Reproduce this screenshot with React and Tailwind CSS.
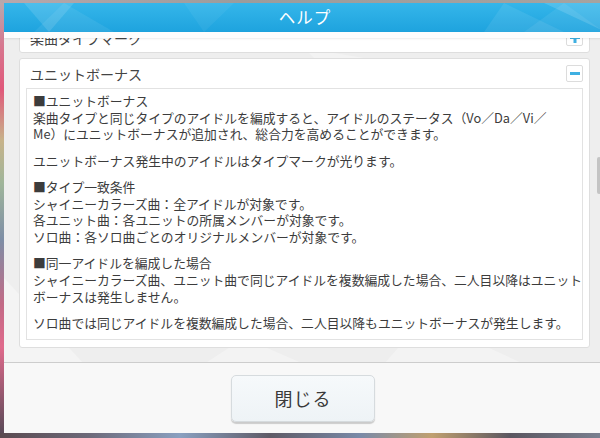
import { useState } from "react"

const bodyLines = [
  ["■ユニットボーナス", "楽曲タイプと同じタイプのアイドルを編成すると、アイドルのステータス（Vo／Da／Vi／", "Me）にユニットボーナスが追加され、総合力を高めることができます。"],
  ["ユニットボーナス発生中のアイドルはタイプマークが光ります。"],
  ["■タイプ一致条件", "シャイニーカラーズ曲：全アイドルが対象です。", "各ユニット曲：各ユニットの所属メンバーが対象です。", "ソロ曲：各ソロ曲ごとのオリジナルメンバーが対象です。"],
  ["■同一アイドルを編成した場合", "シャイニーカラーズ曲、ユニット曲で同じアイドルを複数編成した場合、二人目以降はユニット", "ボーナスは発生しません。"],
  ["ソロ曲では同じアイドルを複数編成した場合、二人目以降もユニットボーナスが発生します。"],
]

function ToggleButton({ open }) {
  return (
    <div className="relative w-[17px] h-[17px] shrink-0 rounded-[2px] border border-[#dcdcdc] bg-white flex items-center justify-center">
      <span className="block w-[10px] h-[3px] bg-[#3fb0e2]" />
      {!open && <span className="absolute left-1/2 top-1/2 -translate-x-1/2 -translate-y-1/2 block w-[3px] h-[10px] bg-[#3fb0e2]" />}
    </div>
  )
}

function HelpCard({ title, open, children }) {
  return (
    <div className="bg-white border border-[#dedede] rounded-[3px]">
      <div className="h-[29px] flex items-center justify-between pl-[10px] pr-[6px]">
        <span className="text-[14px] leading-none text-[#444]">{title}</span>
        <ToggleButton open={open} />
      </div>
      {open && <div className="px-[6px] pb-[7px]">{children}</div>}
    </div>
  )
}

export default function App() {
  const [openId] = useState("unit")

  return (
    <div className="w-[600px] h-[438px] overflow-hidden flex flex-col bg-[#8f8a8c] font-['Noto_Sans_CJK_JP','Noto_Sans',sans-serif]">
      <div className="h-[3px] shrink-0 bg-[linear-gradient(90deg,#b8a8ac,#9c9c9c_40%,#a6a3a0)]" />
      <div className="flex flex-1 min-h-0">
        {/* 左端の背景 */}
        <div className="w-[4px] shrink-0 bg-[linear-gradient(180deg,#b9a9ad_0%,#d7778f_10%,#e0587a_20%,#c7b38a_32%,#9fb59a_42%,#7e8ea6_55%,#c26a86_70%,#e06a8c_80%,#5a4a58_100%)]" />

        {/* ダイアログ本体 */}
        <div className="w-[602px] shrink-0 flex flex-col bg-[#eeeeee]">
          <div className="relative h-[29px] shrink-0 overflow-hidden bg-[linear-gradient(180deg,#35b6ea_0%,#1ea3de_100%)] flex items-center justify-center">
            <svg className="absolute inset-0" width="602" height="29" viewBox="0 0 602 29">
              <polygon points="20,0 70,0 45,29" fill="#ffffff" opacity="0.12" />
              <polygon points="60,0 110,29 30,29" fill="#ffffff" opacity="0.07" />
              <polygon points="180,0 230,0 200,29" fill="#ffffff" opacity="0.05" />
              <polygon points="500,0 560,29 480,29" fill="#ffffff" opacity="0.08" />
              <polygon points="540,0 602,0 602,29" fill="#ffffff" opacity="0.14" />
              <polygon points="560,0 600,29 520,29" fill="#ffffff" opacity="0.07" />
            </svg>
            <span className="relative text-white text-[16.5px] leading-none tracking-[1px]">ヘルプ</span>
          </div>
          <div className="h-[6px] shrink-0 bg-white/90 shadow-[0_1px_2px_rgba(0,0,0,0.08)] relative z-10" />

          <div className="relative flex-1 min-h-0 overflow-hidden">
            <svg className="absolute inset-0" width="602" height="326" viewBox="0 0 602 326">
              <polygon points="0,240 80,326 0,326" fill="#ffffff" opacity="0.35" />
              <polygon points="240,300 300,326 200,326" fill="#ffffff" opacity="0.3" />
              <polygon points="420,280 520,326 380,326" fill="#ffffff" opacity="0.3" />
              <polygon points="300,10 360,20 330,40" fill="#ffffff" opacity="0.3" />
            </svg>
            <div className="relative mt-[-16px] pl-[15px] w-[586px] flex flex-col gap-[5px]">
              <HelpCard title="楽曲タイプマーク" open={openId === "mark"} />
              <HelpCard title="ユニットボーナス" open={openId === "unit"}>
                <div className="border border-[#e2e2e2] bg-white pl-[6px] pr-[4px] pt-[4px] pb-[6px] h-[252px] text-[12.8px] leading-[16.7px] text-[#3c3c3c] whitespace-nowrap">
                  {bodyLines.map((para, i) => (
                    <div key={i} className={i === 0 ? "" : "mt-[9.5px]"}>
                      {para.map((line) => (
                        <div key={line}>{line}</div>
                      ))}
                    </div>
                  ))}
                </div>
              </HelpCard>
            </div>
            {/* スクロールバー */}
            <div className="absolute left-[593px] top-[119px] w-[4px] h-[37px] rounded-[2px] bg-[#c4c4c4]" />
          </div>

          <div className="h-[71px] shrink-0 border-t border-[#cdcdcd] bg-[#f8f8f8] flex items-center justify-center pr-[4px]">
            <button className="w-[144px] h-[47px] rounded-[5px] border border-[#d6dbde] bg-[linear-gradient(180deg,#f6f9fb,#eef3f6)] shadow-[0_2px_1px_rgba(0,0,0,0.18)] text-[18px] text-[#3a3a3a] tracking-[1px]">
              閉じる
            </button>
          </div>
        </div>
      </div>
      <div className="h-[5px] shrink-0 bg-[linear-gradient(90deg,#5a4a50_0%,#6d6a7a_15%,#8aa0c0_30%,#5e5a66_45%,#7a8aa8_60%,#c0a070_72%,#5a5660_85%,#7a8090_100%)]" />
    </div>
  )
}
